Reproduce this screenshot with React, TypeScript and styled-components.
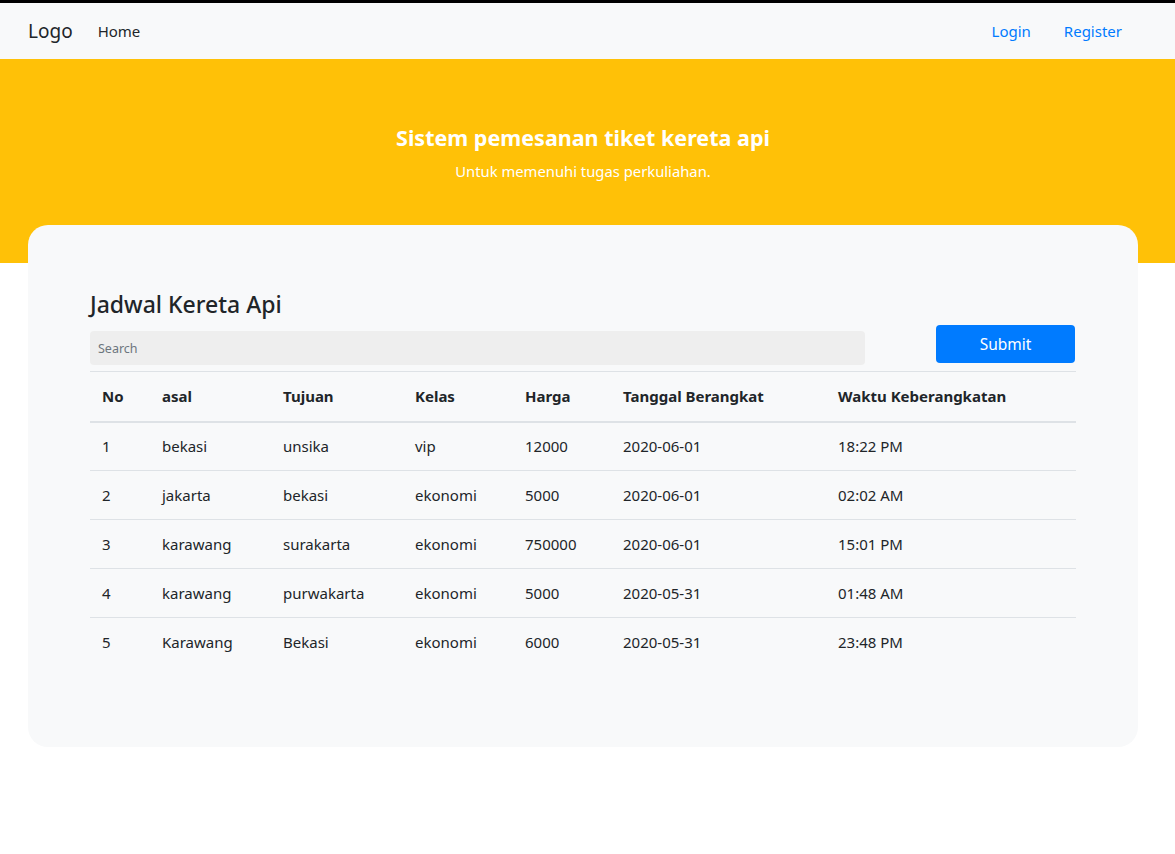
import React from "react";
import styled, { createGlobalStyle } from "styled-components";

const Global = createGlobalStyle`
  * { box-sizing: border-box; }
  html, body { margin: 0; padding: 0; background: #ffffff; }
  body {
    font-family: "Noto Sans", "Open Sans", "Liberation Sans", sans-serif;
    color: #212529;
    font-size: 16px;
  }
`;

const Page = styled.div`
  border-top: 3px solid #000;
  min-height: 851px;
`;

const Navbar = styled.nav`
  height: 56px;
  background: #f8f9fa;
  display: flex;
  align-items: center;
  padding: 0 53px 0 28px;
`;

const Brand = styled.span`
  font-size: 19px;
  margin-right: 25px;
  color: #212529;
`;

const NavLink = styled.a<{ $accent?: boolean }>`
  font-size: 15px;
  color: ${(p) => (p.$accent ? "#007bff" : "#212529")};
  text-decoration: none;
  margin-left: ${(p) => (p.$accent ? "33px" : "0")};
`;

const Spacer = styled.div`
  flex: 1;
`;

const Jumbotron = styled.header`
  background: #ffc107;
  height: 204px;
  display: flex;
  flex-direction: column;
  align-items: center;
  padding: 64px 9px 0 0;
  color: #fff;
`;

const Title = styled.h1`
  margin: 0;
  font-size: 21.5px;
  font-weight: 700;
  line-height: 30px;
`;

const Subtitle = styled.p`
  margin: 8px 0 0;
  font-size: 14.8px;
  line-height: 20px;
`;

const Card = styled.main`
  margin: -38px 37px 0 28px;
  background: #f8f9fa;
  border-radius: 20px;
  padding: 64px 62px 80px 62px;
`;

const Heading = styled.h4`
  margin: 0;
  font-size: 23px;
  font-weight: 500;
  line-height: 30px;
`;

const Toolbar = styled.div`
  display: flex;
  align-items: flex-start;
  justify-content: space-between;
  margin-top: 6px;
  padding-right: 1px;
  height: 46px;
`;

const SearchInput = styled.input`
  width: 775px;
  height: 34px;
  margin-top: 6px;
  border: none;
  border-radius: 4px;
  background: #eeeeee;
  padding: 0 8px;
  font-family: inherit;
  font-size: 12.5px;
  color: #495057;
  outline: none;
  &::placeholder { color: #6c757d; }
`;

const Button = styled.button`
  width: 139px;
  height: 38px;
  border: none;
  border-radius: 4px;
  background: #007bff;
  color: #fff;
  font-family: inherit;
  font-size: 15.5px;
`;

const Table = styled.table`
  width: 986px;
  border-collapse: collapse;
  table-layout: fixed;
`;

const Th = styled.th`
  text-align: left;
  font-weight: 700;
  font-size: 15px;
  padding: 12px;
  height: 50px;
  border-top: 1px solid #dee2e6;
  border-bottom: 2px solid #dee2e6;
  white-space: nowrap;
`;

const Td = styled.td`
  font-size: 15px;
  padding: 12px;
  height: 49px;
  border-top: 1px solid #dee2e6;
  white-space: nowrap;
`;

const FirstRow = styled.tr`
  & > td { border-top: none; }
`;

const widths = [60, 121, 132, 110, 98, 215, 250];
const headers = ["No", "asal", "Tujuan", "Kelas", "Harga", "Tanggal Berangkat", "Waktu Keberangkatan"];
const rows = [
  ["1", "bekasi", "unsika", "vip", "12000", "2020-06-01", "18:22 PM"],
  ["2", "jakarta", "bekasi", "ekonomi", "5000", "2020-06-01", "02:02 AM"],
  ["3", "karawang", "surakarta", "ekonomi", "750000", "2020-06-01", "15:01 PM"],
  ["4", "karawang", "purwakarta", "ekonomi", "5000", "2020-05-31", "01:48 AM"],
  ["5", "Karawang", "Bekasi", "ekonomi", "6000", "2020-05-31", "23:48 PM"],
];

export default function App() {
  return (
    <Page>
      <Global />
      <Navbar>
        <Brand>Logo</Brand>
        <NavLink href="#">Home</NavLink>
        <Spacer />
        <NavLink $accent href="#">Login</NavLink>
        <NavLink $accent href="#">Register</NavLink>
      </Navbar>
      <Jumbotron>
        <Title>Sistem pemesanan tiket kereta api</Title>
        <Subtitle>Untuk memenuhi tugas perkuliahan.</Subtitle>
      </Jumbotron>
      <Card>
        <Heading>Jadwal Kereta Api</Heading>
        <Toolbar>
          <SearchInput placeholder="Search" />
          <Button>Submit</Button>
        </Toolbar>
        <Table>
          <colgroup>
            {widths.map((w, i) => (
              <col key={i} style={{ width: w }} />
            ))}
          </colgroup>
          <thead>
            <tr>
              {headers.map((h) => (
                <Th key={h}>{h}</Th>
              ))}
            </tr>
          </thead>
          <tbody>
            {rows.map((r, i) => {
              const cells = r.map((c, j) => <Td key={j}>{c}</Td>);
              return i === 0 ? <FirstRow key={i}>{cells}</FirstRow> : <tr key={i}>{cells}</tr>;
            })}
          </tbody>
        </Table>
      </Card>
    </Page>
  );
}
